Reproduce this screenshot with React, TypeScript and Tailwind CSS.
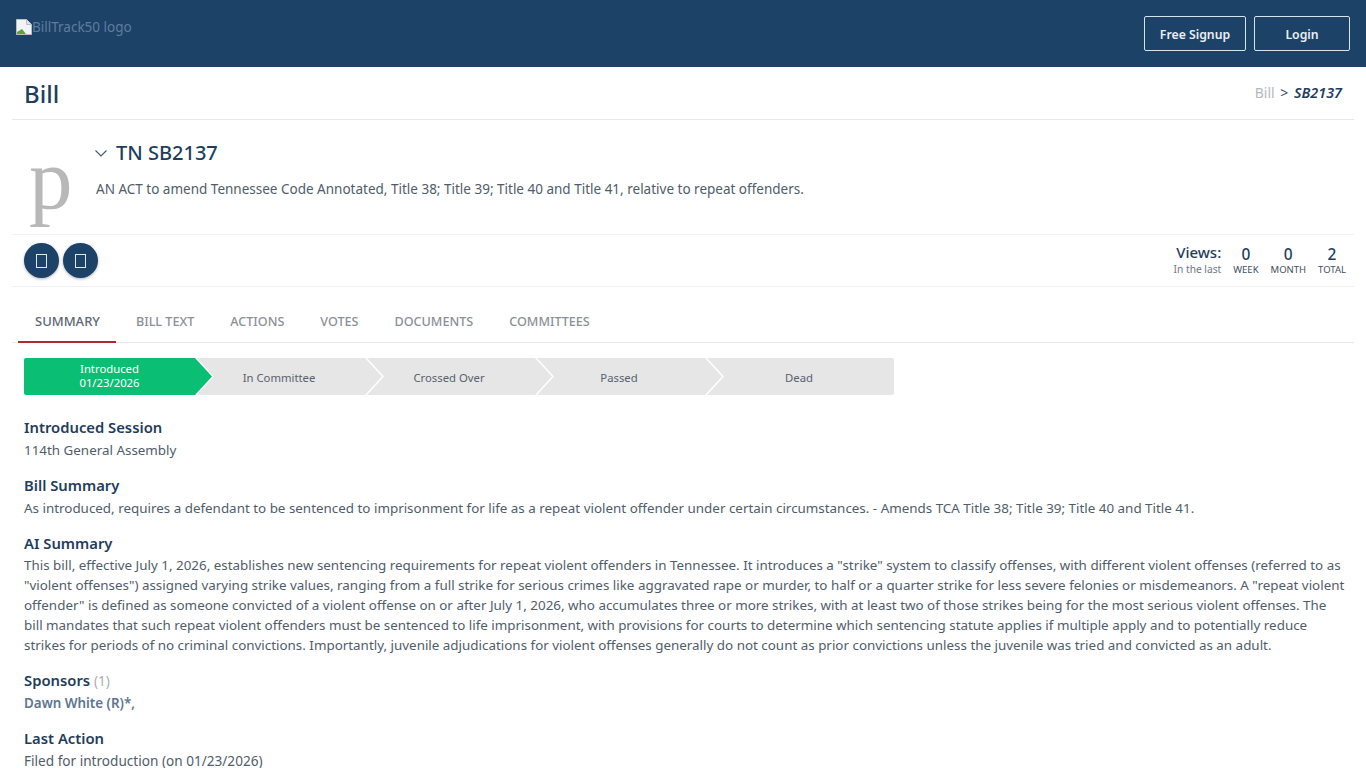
import React from 'react';

const tabs = ['SUMMARY', 'BILL TEXT', 'ACTIONS', 'VOTES', 'DOCUMENTS', 'COMMITTEES'];

const BrokenImage = () => (
  <svg width="16" height="16" viewBox="0 0 16 16" className="shrink-0">
    <path d="M0.5 0.5H10.5L15.5 5.5V15.5H0.5Z" fill="#f1f3f4" stroke="#b9bec4" />
    <path d="M10.5 0.5V5.5H15.5" fill="#dfe3e6" stroke="#b9bec4" />
    <path d="M1 15V13L6 10L10 15Z" fill="#5fa33c" />
  </svg>
);

const Tofu = () => (
  <button className="flex h-[35px] w-[35px] items-center justify-center rounded-full bg-[#1c4268] shadow-[0_1px_3px_rgba(0,0,0,0.3)]">
    <span className="block h-[14px] w-[11px] border border-[#dfe6ee]" />
  </button>
);

const Stat = ({ value, label }: { value: string; label: string }) => (
  <div className="flex flex-col items-center">
    <span className="text-[15.5px] leading-[20px] font-medium text-[#1c3f60]">{value}</span>
    <span className="-mt-px text-[9.5px] leading-[14px] text-[#3f4f60]">{label}</span>
  </div>
);

const Section = ({ title, extra, children, tight }: { title: string; extra?: string; children: React.ReactNode; tight?: boolean }) => (
  <div className="mb-[13px]">
    <h3 className={`h-[24px] text-[14.8px] leading-[24px] font-semibold text-[#1f3d5c] ${tight ? '' : 'mb-px'}`}>
      {title} {extra && <span className="text-[13.5px] font-normal text-[#a9adb2]">{extra}</span>}
    </h3>
    <div className="text-[13.4px] leading-[20px] whitespace-nowrap text-[#4f5d6b]">{children}</div>
  </div>
);

const Step = ({ label }: { label: string }) => (
  <div className="-ml-[15px] flex w-[185px] shrink-0 items-center justify-center bg-[#e6e6e6] pt-[3px] pr-[21px] text-[#56626e] [clip-path:polygon(0_0,168px_0,100%_50%,168px_100%,0_100%,17px_50%)]">
    {label}
  </div>
);

export default function App() {
  return (
    <div className="h-[768px] overflow-hidden bg-white font-['Noto_Sans',sans-serif]">
      {/* Top bar */}
      <header className="flex h-[67px] items-start justify-between bg-[#1c4268] px-[16px]">
        <div className="mt-[17px] flex items-center text-[13.5px] leading-[20px] text-[#5f7d9b]">
          <BrokenImage />
          <span>BillTrack50 logo</span>
        </div>
        <div className="mt-[16px] flex gap-[8px]">
          <button className="h-[35px] w-[102px] rounded-[2px] border border-[#d5e3ee] pt-[3px] text-[12.25px] font-semibold text-[#e9eff5]">Free Signup</button>
          <button className="h-[35px] w-[96px] rounded-[2px] border border-[#d5e3ee] pt-[3px] text-[12.25px] font-semibold text-[#e9eff5]">Login</button>
        </div>
      </header>

      <main className="px-[12px]">
        <div className="flex h-[53px] items-center justify-between border-b border-[#e6e8ea] px-[12px]">
          <h1 className="pt-[2px] text-[24px] leading-[32px] font-medium text-[#1c3f60]">Bill</h1>
          <div className="text-[14px] text-[#b5b8bb]">
            Bill <span className="mx-[2px] text-[#3a4c5e]">&gt;</span> <span className="text-[14.4px] font-semibold text-[#1f3d5c] italic">SB2137</span>
          </div>
        </div>

        <div className="flex h-[115px] border-b border-[#f0f1f2] px-[12px]">
          <div className="mt-[11px] h-[103px] w-[72px] shrink-0 overflow-hidden pl-[5px] font-['Liberation_Serif',serif] text-[87px] leading-[96px] text-[#b8b8b8]">p</div>
          <div>
            <div className="mt-[20px] flex items-center">
              <svg width="14" height="14" viewBox="0 0 14 14" fill="none" stroke="#3f5872" strokeWidth="1.1" className="mr-[8px] -ml-[2px]">
                <path d="M1.5 4.5L7 10L12.5 4.5" />
              </svg>
              <h2 className="text-[20px] leading-[26px] font-medium text-[#1c3f60]">TN SB2137</h2>
            </div>
            <p className="mt-[13px] text-[13.5px] leading-[20px] text-[#4f5d6b]">AN ACT to amend Tennessee Code Annotated, Title 38; Title 39; Title 40 and Title 41, relative to repeat offenders.</p>
          </div>
        </div>

        <div className="flex h-[52px] items-center justify-between border-b border-[#f0f1f2] pr-[8px] pl-[12px]">
          <div className="flex gap-[4px]">
            <Tofu />
            <Tofu />
          </div>
          <div className="flex gap-[12px]">
            <div className="flex flex-col items-end">
              <span className="-mt-[2px] text-[15px] leading-[20px] font-medium text-[#1f3d5c]">Views:</span>
              <span className="text-[10.2px] leading-[14px] text-[#6b7885]">In the last</span>
            </div>
            <Stat value="0" label="WEEK" />
            <Stat value="0" label="MONTH" />
            <Stat value="2" label="TOTAL" />
          </div>
        </div>

        <nav className="mt-[16px] flex h-[40px] border-b border-[#e6e8ea] pl-[6px]">
          {tabs.map((t, i) => (
            <div
              key={t}
              className={`flex h-[40px] items-center border-b-2 font-medium ${i === 0 ? 'mr-[2px] border-[#b3262e] pr-[16px] pl-[17px] text-[13px] text-[#5c6773]' : 'border-transparent px-[18px] text-[12.6px] text-[#8a9097]'}`}
            >
              {t}
            </div>
          ))}
        </nav>

        <div className="px-[12px]">
          <div className="mt-[15px] flex h-[37px] w-[870px] overflow-hidden rounded-[2px] text-[11.3px] leading-[14px]">
            <div className="flex w-[188px] shrink-0 items-center justify-center bg-[#0abf73] pr-[17px] pb-[2px] text-center text-white [clip-path:polygon(0_0,171px_0,100%_50%,171px_100%,0_100%)]">
              <span>Introduced<br />01/23/2026</span>
            </div>
            <Step label="In Committee" />
            <Step label="Crossed Over" />
            <Step label="Passed" />
            <div className="-ml-[15px] flex w-[187px] shrink-0 items-center justify-center bg-[#e6e6e6] pt-[3px] pr-[3px] text-[#56626e] [clip-path:polygon(0_0,100%_0,100%_100%,0_100%,17px_50%)]">Dead</div>
          </div>

          <div className="mt-[20px]">
            <Section title="Introduced Session">114th General Assembly</Section>
            <Section title="Bill Summary">As introduced, requires a defendant to be sentenced to imprisonment for life as a repeat violent offender under certain circumstances. - Amends TCA Title 38; Title 39; Title 40 and Title 41.</Section>
            <Section title="AI Summary" tight>
              This bill, effective July 1, 2026, establishes new sentencing requirements for repeat violent offenders in Tennessee. It introduces a "strike" system to classify offenses, with different violent offenses (referred to as<br />
              "violent offenses") assigned varying strike values, ranging from a full strike for serious crimes like aggravated rape or murder, to half or a quarter strike for less severe felonies or misdemeanors. A "repeat violent<br />
              offender" is defined as someone convicted of a violent offense on or after July 1, 2026, who accumulates three or more strikes, with at least two of those strikes being for the most serious violent offenses. The<br />
              bill mandates that such repeat violent offenders must be sentenced to life imprisonment, with provisions for courts to determine which sentencing statute applies if multiple apply and to potentially reduce<br />
              strikes for periods of no criminal convictions. Importantly, juvenile adjudications for violent offenses generally do not count as prior convictions unless the juvenile was tried and convicted as an adult.
            </Section>
            <Section title="Sponsors" extra="(1)">
              <span className="font-semibold text-[#5b7690]">Dawn White (R)*,</span>
            </Section>
            <Section title="Last Action">
              <div className="pt-[3px] text-[13.6px] leading-[14px]">Filed for introduction (on 01/23/2026)</div>
            </Section>
          </div>
        </div>
      </main>
    </div>
  );
}
